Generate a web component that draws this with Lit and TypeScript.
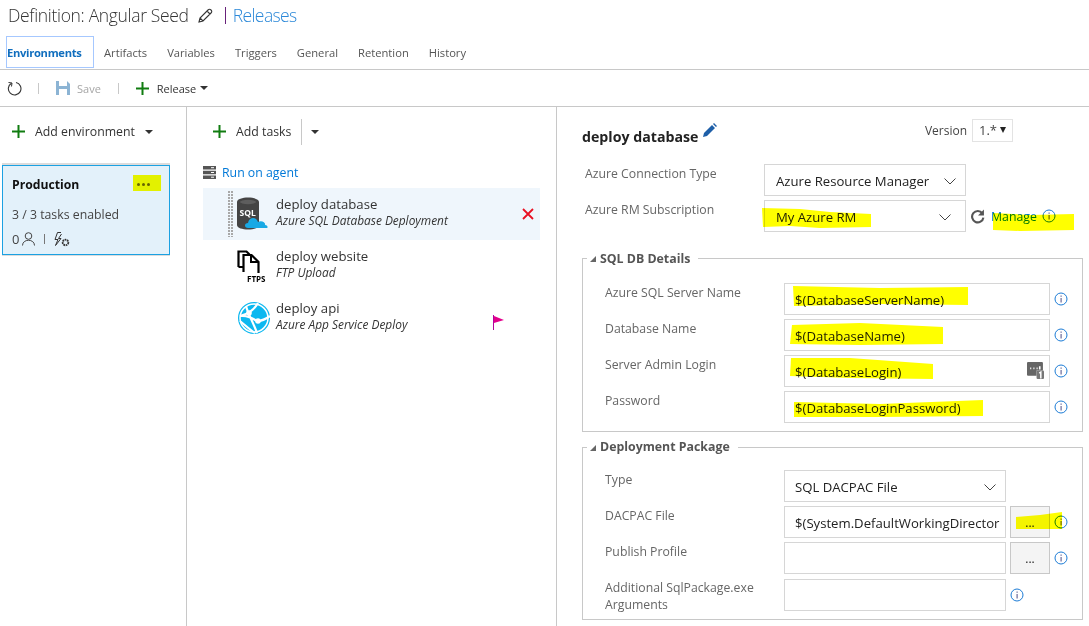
import { LitElement, html, css, svg } from 'lit';
import { customElement } from 'lit/decorators.js';

const tabs = ['Artifacts', 'Variables', 'Triggers', 'General', 'Retention', 'History'];

const tasks = [
  { name: 'deploy database', kind: 'Azure SQL Database Deployment', icon: 'sql', selected: true },
  { name: 'deploy website', kind: 'FTP Upload', icon: 'ftps', selected: false },
  { name: 'deploy api', kind: 'Azure App Service Deploy', icon: 'app', selected: false },
];

// marker strokes somebody scribbled on top of the screenshot
const marks = [
  '133,175 161,175 161,191 133,191',
  '762,208 800,209 830,212 871,214 871,227 820,228 790,226 763,227',
  '993,213 1030,215 1074,214 1074,230 1020,231 993,230',
  '793,286 880,288 968,287 968,305 880,304 794,306',
  '792,325 860,323 943,327 943,344 860,345 790,344',
  '791,358 850,358 933,364 933,379 850,378 790,376',
  '794,402 880,404 983,400 983,416 880,417 794,417',
  '1016,517 1040,515 1062,512 1062,529 1016,529',
];

const info = html`<svg class="info" width="14" height="14" viewBox="0 0 14 14">
  <circle cx="7" cy="7" r="6" fill="none" stroke="#1c7cd6" stroke-width="1"></circle>
  <rect x="6.500" y="6" width="1.200" height="4.500" fill="#6a6a9a"></rect>
  <rect x="6.500" y="3.500" width="1.200" height="1.300" fill="#6a6a9a"></rect>
</svg>`;

const plus = html`<svg class="plus" width="13" height="13" viewBox="0 0 13 13">
  <rect x="5.500" y="0" width="2" height="13" fill="#107c10"></rect>
  <rect x="0" y="5.500" width="13" height="2" fill="#107c10"></rect>
</svg>`;

const caret = html`<svg class="caret" width="8" height="4" viewBox="0 0 8 4"><path d="M0 0h8L4 4z" fill="#333"></path></svg>`;

const chevron = html`<svg width="12" height="7" viewBox="0 0 12 7"><path d="M.5.5 6 6l5.500-5.500" fill="none" stroke="#444"></path></svg>`;

const taskIcons: Record<string, unknown> = {
  sql: svg`<svg width="34" height="34" viewBox="0 0 34 34">
    <path d="M0 5c0-6 22-6 22 0v23c0 6-22 6-22 0z" fill="#444"></path>
    <ellipse cx="11" cy="5" rx="8" ry="2.200" fill="#5e5e5e"></ellipse>
    <text x="2.500" y="19" font-size="8.500" font-weight="700" fill="#fff" font-family="Open Sans, sans-serif">SQL</text>
    <path d="M11 31c-4 0-4-5 0-5 1-6 8-7 10-1 4-2 8 1 7 3 3 0 3 3 2 3z" fill="#19a9e5"></path>
  </svg>`,
  ftps: svg`<svg width="34" height="34" viewBox="0 0 34 34">
    <path d="M1.500 18V2.500h8l3 3" fill="none" stroke="#000" stroke-width="2.200"></path>
    <path d="M1.500 18h4M6.500 23V6h8l7 7v11" fill="none" stroke="#000" stroke-width="2.200"></path>
    <path d="M14 6v7h7" fill="none" stroke="#000" stroke-width="2"></path>
    <text x="10" y="33" font-size="8" font-weight="700" fill="#000" font-family="Open Sans, sans-serif">FTPS</text>
  </svg>`,
  app: svg`<svg width="34" height="34" viewBox="0 0 34 34">
    <circle cx="17" cy="17" r="16" fill="#0cb8f0"></circle>
    <circle cx="17" cy="17" r="14" fill="none" stroke="#fff" stroke-width="1.500"></circle>
    <path d="M3 15c8-2 14-6 18-13M9 5c2 8 7 16 11 27M20 20c5 0 9-2 13-5M3 20c5 4 9 8 15 12M20 20C14 16 9 14 3 15" fill="none" stroke="#fff" stroke-width="2.200"></path>
    <circle cx="12" cy="12" r="2.800" fill="#fff"></circle>
    <circle cx="21" cy="20" r="2.800" fill="#fff"></circle>
  </svg>`,
};

@customElement('app-root')
class AppRoot extends LitElement {
  static styles = css`
    :host {
      display: block;
      position: relative;
      width: 1089px;
      height: 626px;
      overflow: hidden;
      background: #fff;
      font-family: 'Open Sans', sans-serif;
      font-size: 12.300px;
      color: #333;
    }
    svg { display: block; flex: none; }
    .title-row {
      display: flex;
      align-items: center;
      height: 30px;
      padding-left: 8px;
      font-size: 17.500px;
      font-weight: 300;
      letter-spacing: -0.33px;
      color: #333;
    }
    .title-row .pencil { margin: 0 12px 0 9px; }
    .title-row .bar { width: 1px; height: 17px; background: #68217a; margin-right: 7px; }
    .title-row .link { color: #2b88d8; letter-spacing: -0.6px; }
    .tabs {
      display: flex;
      align-items: center;
      height: 34px;
      margin: 5px 0 0 6px;
      gap: 20px;
      font-size: 11.200px;
      color: #555;
    }
    .tab-on {
      display: flex;
      align-items: center;
      height: 32px;
      width: 88px;
      box-sizing: border-box;
      border: 1px solid #a6c8ff;
      margin-right: -10px;
      font-weight: 700;
      color: #106ebe;
      white-space: nowrap;
      letter-spacing: -0.3px;
    }
    .toolbar {
      display: flex;
      align-items: center;
      height: 36px;
      border-top: 1px solid #c8c8c8;
      border-bottom: 1px solid #c8c8c8;
      padding-left: 7px;
      font-size: 11px;
    }
    .sep { width: 1px; height: 11px; background: #c8c8c8; }
    .sep.a { margin: 0 17px 0 16px; }
    .sep.b { margin: 0 17px; }
    .save { color: #a6a6a6; margin-left: 7px; }
    .release { margin: 0 4px 0 8px; color: #333; }
    .columns {
      display: grid;
      grid-template-columns: 187px 370px 1fr;
      height: 519px;
    }
    .left { border-right: 1px solid #c8c8c8; }
    .add {
      display: flex;
      align-items: center;
      height: 49px;
      color: #333;
    }
    .left .add { padding-left: 12px; }
    .left .add span { margin: 0 10px; }
    .card {
      box-sizing: border-box;
      width: 168px;
      height: 90px;
      margin: 9px 0 0 2px;
      border: 1px solid #1ba1e2;
      box-shadow: 0 -2px 0 #dcdcdc, 0 1px 0 #dcdcdc;
      background: #e3f1fa;
      padding: 9px 9px 0;
      color: #444;
    }
    .card .top { display: flex; align-items: center; justify-content: space-between; height: 20px; }
    .card h3 { margin: 0; font-size: 12.200px; font-weight: 700; color: #111; line-height: 20px; }
    .card .dots { display: flex; gap: 2px; margin-right: 10px; margin-top: -2px; }
    .card .dots i { width: 3px; height: 3px; border-radius: 50%; background: #666; }
    .card p { margin: 10px 0 0; line-height: 20px; }
    .card .meta { display: flex; align-items: center; height: 20px; margin-top: 4px; font-size: 13px; }
    .card .meta .person { margin-left: 3px; }
    .card .pipe { width: 1px; height: 10px; background: #777; margin: 0 9px; }
    .mid { border-right: 1px solid #c8c8c8; padding-left: 16px; padding-right: 16px; }
    .mid .add { padding-left: 10px; }
    .mid .add span { margin: 0 10px; }
    .mid .add .vbar { width: 1px; height: 26px; background: #c8c8c8; margin-right: 9px; }
    .agent { display: flex; align-items: center; height: 18px; margin-top: 7px; gap: 6px; color: #0078d7; }
    .tasklist { margin-top: 7px; }
    .task {
      position: relative;
      display: flex;
      align-items: center;
      height: 52px;
      padding-left: 34px;
    }
    .task.on { background: #eff6fc; }
    .task.on::before {
      content: '';
      position: absolute;
      left: 25px;
      top: 3px;
      bottom: 3px;
      width: 5px;
      background:
        repeating-linear-gradient(90deg, transparent 0 2px, #eff6fc 2px 3px),
        repeating-linear-gradient(#a8a8a8 0 2px, #eff6fc 2px 3px);
    }
    .task .txt { margin-left: 5px; padding-bottom: 4px; }
    .task .name { font-size: 13.200px; line-height: 17px; color: #333; }
    .task .kind { font-size: 11.900px; font-style: italic; line-height: 15px; color: #333; }
    .task .act { margin-left: auto; margin-right: 6px; }
    .task .flag { margin-left: auto; margin-right: 36px; margin-top: 8px; }
    .right { padding: 0 6px 0 25px; }
    .head { display: flex; height: 57px; }
    .head h2 {
      display: flex;
      margin: 21px 0 0;
      font-size: 14.200px;
      font-weight: 700;
      color: #222;
      line-height: 18px;
      height: 18px;
    }
    .head h2 svg { margin: -5px 0 0 5px; }
    .version { display: flex; align-items: center; height: 22px; margin: 12px 0 0 auto; padding-right: 70px; color: #444; font-size: 12px; }
    .version .sel {
      display: flex;
      align-items: center;
      box-sizing: border-box;
      width: 41px;
      height: 23px;
      border: 1px solid #e3e3e3;
      margin-left: 5px;
      padding: 0 6px;
      justify-content: space-between;
      font-size: 13px;
    }
    .version .sel i { width: 0; height: 0; border: 3.500px solid transparent; border-top: 6px solid #222; border-bottom: 0; }
    .top-row { display: grid; grid-template-columns: 179px 202px auto; margin: 0 0 4px 3px; }
    label { display: block; padding-top: 1px; color: #666; font-size: 12.250px; line-height: 18px; }
    .box {
      box-sizing: border-box;
      display: flex;
      align-items: center;
      justify-content: space-between;
      height: 32px;
      border: 1px solid #d6d6d6;
      padding: 2px 9px 0 10px;
      color: #222;
      white-space: nowrap;
      overflow: hidden;
      background: #fff;
      font-size: 13.150px;
    }
    .box .secret { margin: -3px -4px 0 0; }
    .top-row .box { padding-left: 11px; }
    .top-row .box.wide { padding-right: 14px; }
    .after { display: flex; align-items: center; padding-left: 4px; }
    .after a { color: #0078d7; margin: 0 5px 0 6px; font-size: 12.300px; }
    fieldset {
      margin: 0;
      padding: 0 0 8px 22px;
      border: 1px solid #c8c8c8;
      min-width: 0;
    }
    fieldset.db { margin-top: 17px; padding-top: 16px; }
    fieldset.pkg { margin-top: 6px; padding-top: 14px; }
    legend {
      display: flex;
      align-items: center;
      gap: 4px;
      margin-left: -18px;
      padding: 0 8px 0 0;
      height: 18px;
      color: #555;
      font-weight: 700;
      font-size: 12.350px;
      background: #fff;
    }
    fieldset.pkg legend span { margin-top: -2px; }
    legend i { width: 0; height: 0; border-left: 6px solid transparent; border-bottom: 6px solid #666; margin: 2px 0 0 3px; }
    .field { display: grid; grid-template-columns: 179px 266px auto; margin-bottom: 4px; }
    fieldset .field:last-child { margin-bottom: 0; }
    .field .info { margin: 9px 0 0 4px; }
    .combo { display: grid; grid-template-columns: 222px 40px; gap: 4px; }
    .combo .browse { background: #f4f4f4; border-color: #c8c8c8; justify-content: center; padding: 0; font-size: 12px; }
    .combo .clip { padding-right: 4px; }
    .field.single { grid-template-columns: 179px 222px; }
    .field.short { grid-template-columns: 179px 222px auto; margin-top: 5px; }
    .field.short label { line-height: 17px; margin: -1px 0 -2px; }
    .marks {
      position: absolute;
      left: 0;
      top: 0;
      mix-blend-mode: multiply;
      pointer-events: none;
    }
  `;

  private renderField(name: string, value: string, icon: unknown = '') {
    return html`<div class="field">
      <label>${name}</label>
      <div class="box"><span>${value}</span>${icon}</div>
      ${info}
    </div>`;
  }

  private renderBrowse(name: string, value: string) {
    return html`<div class="field">
      <label>${name}</label>
      <div class="combo">
        <div class="box clip"><span>${value}</span></div>
        <div class="box browse">...</div>
      </div>
      ${info}
    </div>`;
  }

  render() {
    return html`
      <div class="title-row">
        <span>Definition: Angular Seed</span>
        <svg class="pencil" width="15" height="15" viewBox="0 0 15 15">
          <path d="M1 14l1-4 8-8c1-1 2-1 3 0s1 2 0 3l-8 8zM2 10l3 3M9 3l3 3" fill="none" stroke="#333" stroke-width="1.100"></path>
        </svg>
        <span class="bar"></span>
        <span class="link">Releases</span>
      </div>
      <div class="tabs">
        <div class="tab-on">Environments</div>
        ${tabs.map((t) => html`<span>${t}</span>`)}
      </div>
      <div class="toolbar">
        <svg width="15" height="15" viewBox="0 0 15 15">
          <path d="M4.500 2.200A6.300 6.300 0 1 0 9 1.500" fill="none" stroke="#333" stroke-width="1.100"></path>
          <path d="M1.500 1.500l3.500.5-.5 3.500" fill="none" stroke="#333" stroke-width="1"></path>
        </svg>
        <span class="sep a"></span>
        <svg width="14" height="14" viewBox="0 0 14 14">
          <path d="M0 0h11l3 3v11H0z" fill="#8cb4d4"></path>
          <rect x="3" y="0" width="8" height="5" fill="#fff"></rect>
          <rect x="3" y="8" width="8" height="6" fill="#fff"></rect>
        </svg>
        <span class="save">Save</span>
        <span class="sep b"></span>
        ${plus}
        <span class="release">Release</span>
        ${caret}
      </div>
      <div class="columns">
        <div class="left">
          <div class="add">${plus}<span>Add environment</span>${caret}</div>
          <div class="card">
            <div class="top">
              <h3>Production</h3>
              <div class="dots"><i></i><i></i><i></i></div>
            </div>
            <p>3 / 3 tasks enabled</p>
            <div class="meta">
              0
              <svg class="person" width="13" height="14" viewBox="0 0 13 14">
                <circle cx="6.500" cy="4" r="3.300" fill="none" stroke="#444"></circle>
                <path d="M.5 13.500c0-7 12-7 12 0" fill="none" stroke="#444"></path>
              </svg>
              <span class="pipe"></span>
              <svg width="16" height="15" viewBox="0 0 16 15">
                <path d="M7 .5H3.500L1 7.500h3l-2.500 6 5.500-7H4.500l3-4.500" fill="none" stroke="#333"></path>
                <circle cx="11.500" cy="10.500" r="2.800" fill="none" stroke="#333" stroke-width="1.800" stroke-dasharray="1.700 .7"></circle>
              </svg>
            </div>
          </div>
        </div>
        <div class="mid">
          <div class="add">
            ${plus}
            <span>Add tasks</span>
            <div class="vbar"></div>
            ${caret}
          </div>
          <div class="agent">
            <svg width="13" height="13" viewBox="0 0 13 13">
              <path d="M0 0h13v3.500H0zM0 4.700h13v3.600H0zM0 9.500h13V13H0z" fill="#555"></path>
              <path d="M8 1.700h3M8 6.500h3M8 11.200h3" stroke="#fff"></path>
            </svg>
            Run on agent
          </div>
          <div class="tasklist">
            ${tasks.map(
              (t) => html`
                <div class="task ${t.selected ? 'on' : ''}">
                  ${taskIcons[t.icon]}
                  <div class="txt">
                    <div class="name">${t.name}</div>
                    <div class="kind">${t.kind}</div>
                  </div>
                  ${t.selected
                    ? html`<svg class="act" width="12" height="12" viewBox="0 0 12 12"><path d="M1 1l10 10M11 1L1 11" stroke="#e81123" stroke-width="1.800"></path></svg>`
                    : ''}
                  ${t.icon === 'app'
                    ? html`<svg class="flag" width="11" height="15" viewBox="0 0 11 15"><path d="M.5 0v15" stroke="#b4009e"></path><path d="M1 1l10 4-10 3z" fill="#e3008c"></path></svg>`
                    : ''}
                </div>
              `
            )}
          </div>
        </div>
        <div class="right">
          <div class="head">
            <h2>deploy database
              <svg width="14" height="14" viewBox="0 0 14 14"><path d="M0 14l1-4 8-8 3 3-8 8zM10 1l1-1 3 3-1 1z" fill="#1e5fa8"></path></svg>
            </h2>
            <div class="version">Version
              <div class="sel">1.*<i></i></div>
            </div>
          </div>
          <div class="top-row">
            <label>Azure Connection Type</label>
            <div class="box"><span>Azure Resource Manager</span>${chevron}</div>
          </div>
          <div class="top-row">
            <label>Azure RM Subscription</label>
            <div class="box wide"><span>My Azure RM</span>${chevron}</div>
            <div class="after">
              <svg width="15" height="15" viewBox="0 0 14 14">
                <path d="M11.500 4A5.300 5.300 0 1 0 12.500 8" fill="none" stroke="#555" stroke-width="2"></path>
                <path d="M13 .5V6H7.500z" fill="#555"></path>
              </svg>
              <a>Manage</a>${info}
            </div>
          </div>
          <fieldset class="db">
            <legend><i></i><span>SQL DB Details</span></legend>
            ${this.renderField('Azure SQL Server Name', '$(DatabaseServerName)')}
            ${this.renderField('Database Name', '$(DatabaseName)')}
            ${this.renderField(
              'Server Admin Login',
              '$(DatabaseLogin)',
              html`<svg class="secret" width="17" height="17" viewBox="0 0 16 16">
                <path d="M1 0h13a1 1 0 0 1 1 1v7H9v5H1a1 1 0 0 1-1-1V1a1 1 0 0 1 1-1z" fill="#666"></path>
                <path d="M3 6h1M6 6h1M9 6h1M12 4v3" stroke="#fff" stroke-width="1.500"></path>
                <rect x="9" y="8" width="7" height="8" rx="1" fill="#777"></rect>
                <path d="M11.500 10.500l1.500-1v6" fill="none" stroke="#fff" stroke-width="1.400"></path>
              </svg>`
            )}
            ${this.renderField('Password', '$(DatabaseLoginPassword)')}
          </fieldset>
          <fieldset class="pkg">
            <legend><i></i><span>Deployment Package</span></legend>
            <div class="field single">
              <label>Type</label>
              <div class="box"><span>SQL DACPAC File</span>${chevron}</div>
            </div>
            ${this.renderBrowse('DACPAC File', '$(System.DefaultWorkingDirector')}
            ${this.renderBrowse('Publish Profile', '')}
            <div class="field short">
              <label>Additional SqlPackage.exe<br />Arguments</label>
              <div class="box"></div>
              ${info}
            </div>
          </fieldset>
        </div>
      </div>
      <svg class="marks" width="1089" height="626" viewBox="0 0 1089 626">
        ${marks.map((m) => svg`<polygon points="${m}" fill="#ffff00"></polygon>`)}
      </svg>
    `;
  }
}

declare global {
  interface HTMLElementTagNameMap {
    'app-root': AppRoot;
  }
}
